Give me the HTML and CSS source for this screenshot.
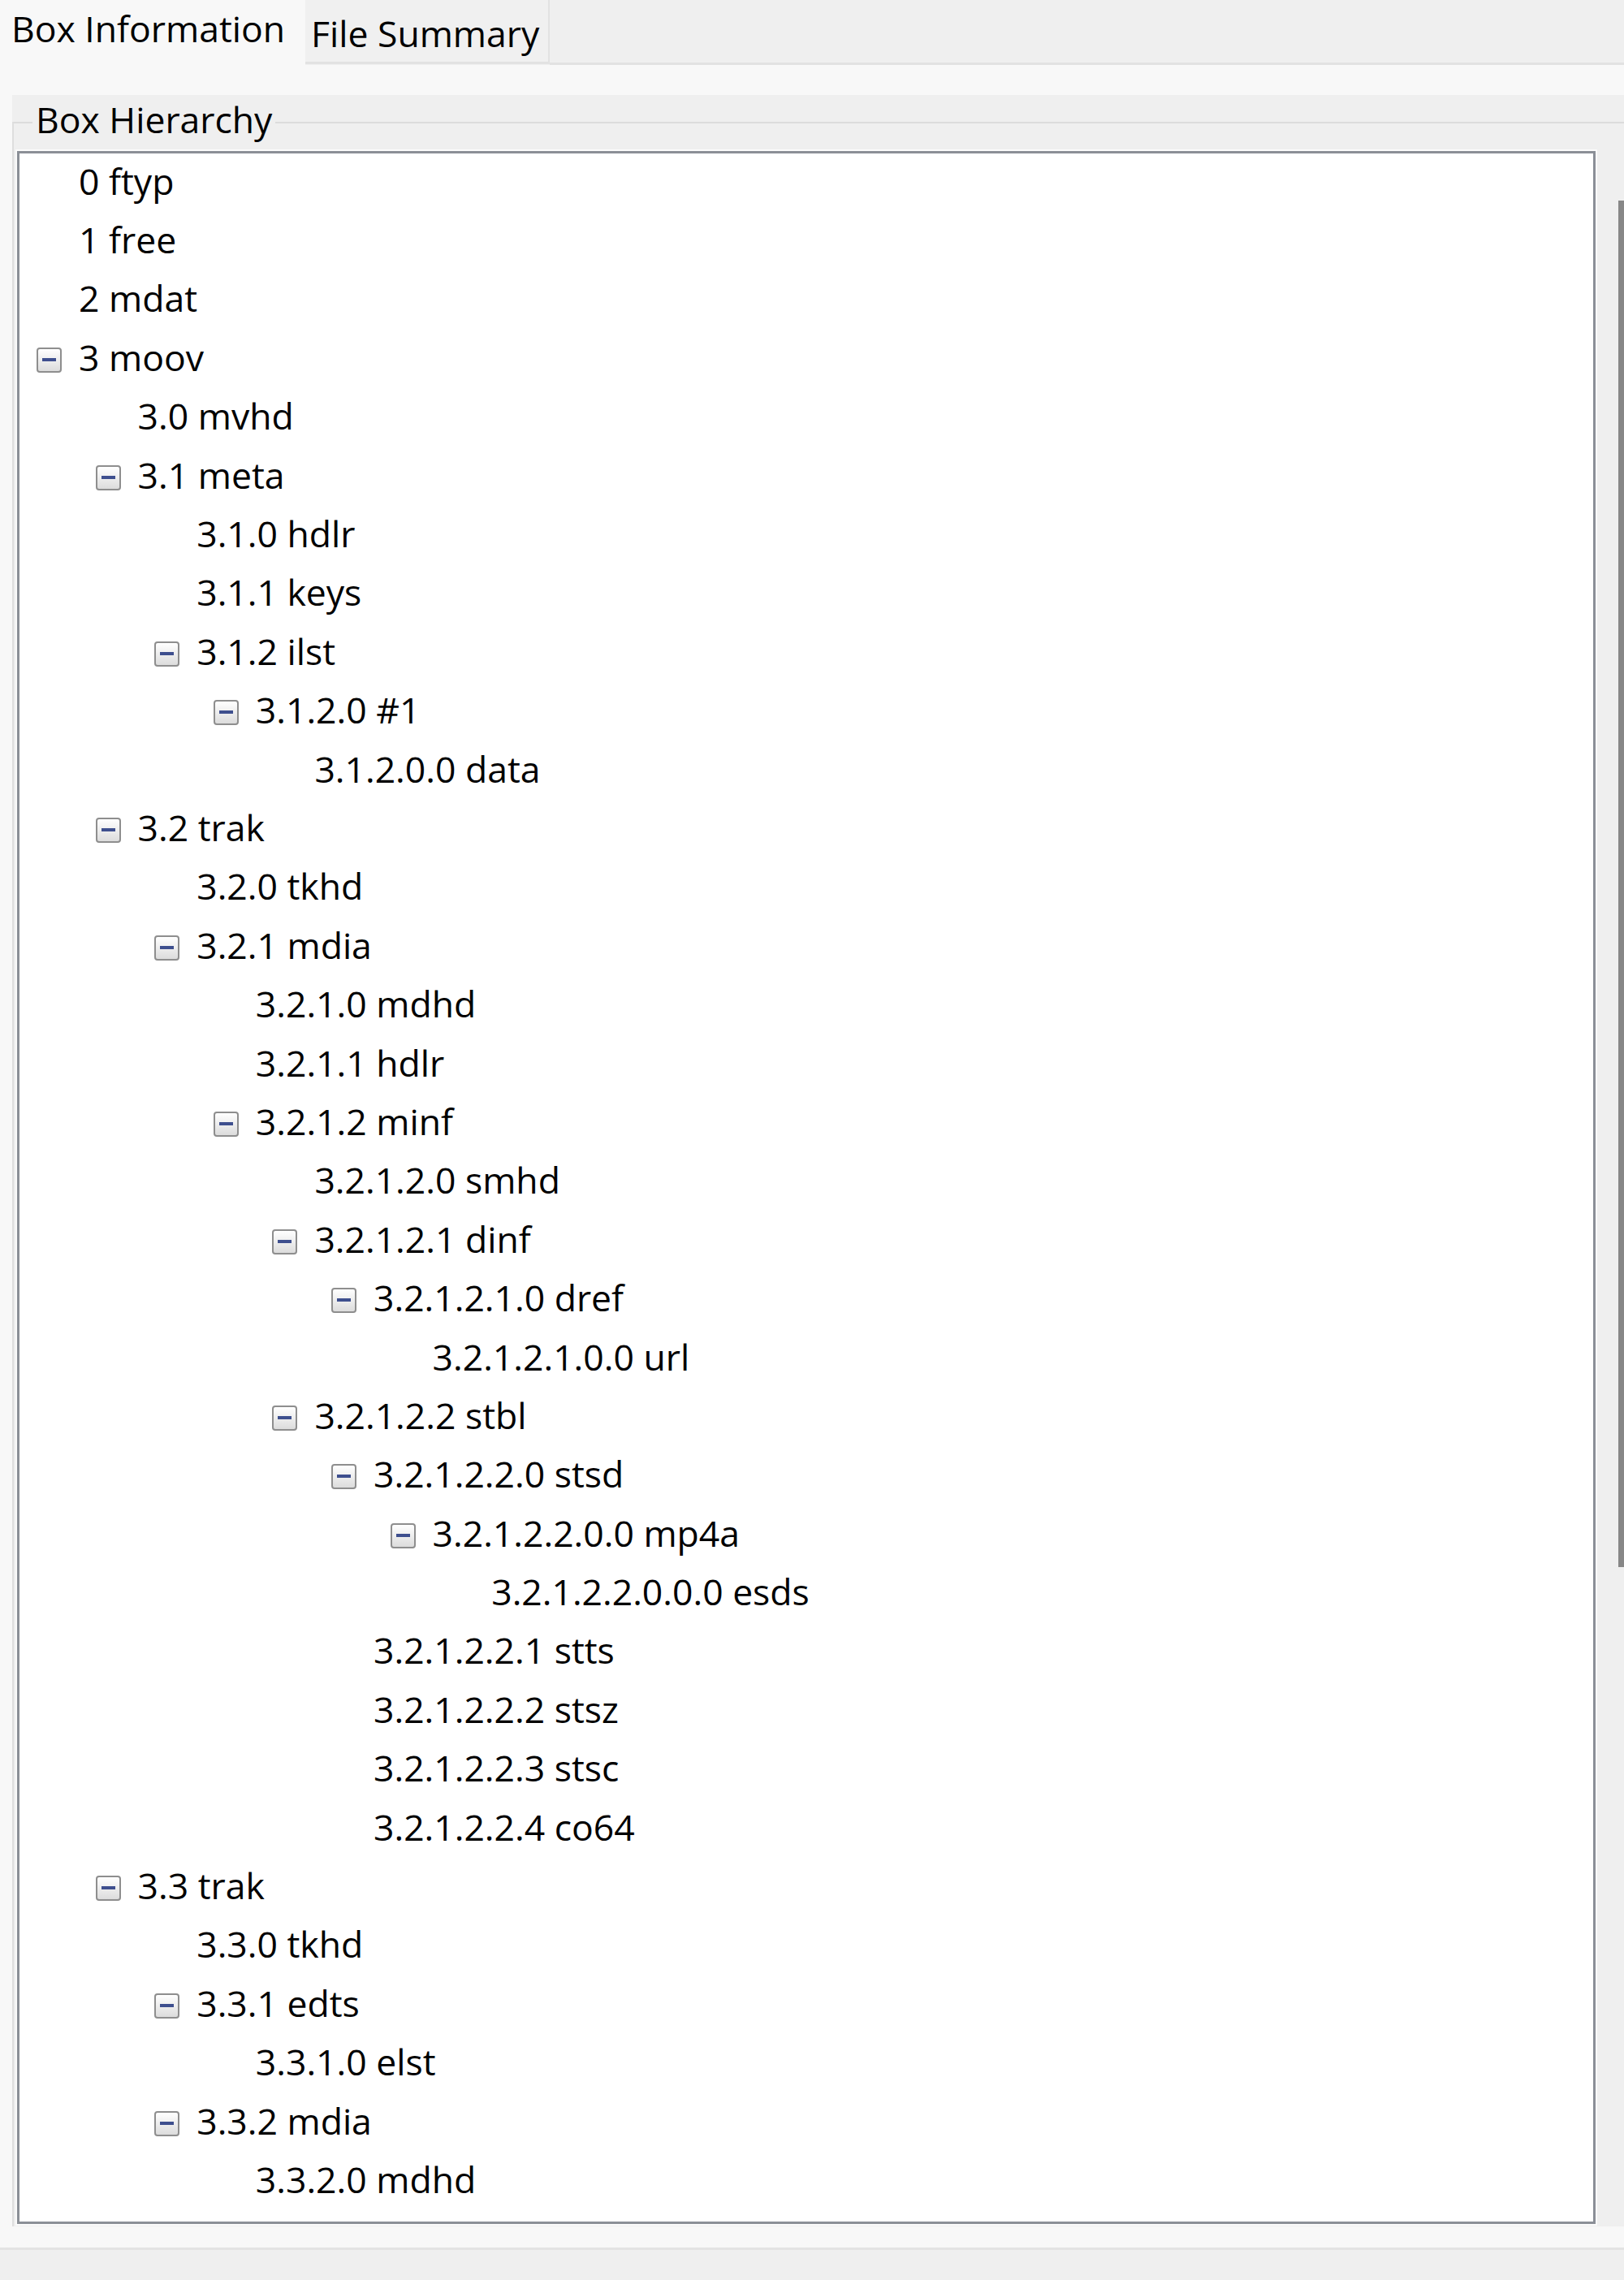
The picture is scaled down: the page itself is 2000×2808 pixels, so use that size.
FILE: index.html
```html
<!DOCTYPE html>
<html>
<head>
<meta charset="utf-8">
<link rel="stylesheet" href="styles.css">
</head>
<body>
<div class="window">
  <div class="tabbar">
    <div class="tab tab-active">Box Information</div>
    <div class="tab tab-idle">File Summary</div>
    <div class="tab-fill"></div>
  </div>
  <div class="pane">
    <div class="group">
      <div class="frame">
        <div class="legend">Box Hierarchy</div>
        <div class="tree">
          <div class="row l0"><span class="sp"></span><span class="lbl">0 ftyp</span></div>
          <div class="row l0"><span class="sp"></span><span class="lbl">1 free</span></div>
          <div class="row l0"><span class="sp"></span><span class="lbl">2 mdat</span></div>
          <div class="row l0"><span class="tg"></span><span class="lbl">3 moov</span></div>
          <div class="row l1"><span class="sp"></span><span class="lbl">3.0 mvhd</span></div>
          <div class="row l1"><span class="tg"></span><span class="lbl">3.1 meta</span></div>
          <div class="row l2"><span class="sp"></span><span class="lbl">3.1.0 hdlr</span></div>
          <div class="row l2"><span class="sp"></span><span class="lbl">3.1.1 keys</span></div>
          <div class="row l2"><span class="tg"></span><span class="lbl">3.1.2 ilst</span></div>
          <div class="row l3"><span class="tg"></span><span class="lbl">3.1.2.0 #1</span></div>
          <div class="row l4"><span class="sp"></span><span class="lbl">3.1.2.0.0 data</span></div>
          <div class="row l1"><span class="tg"></span><span class="lbl">3.2 trak</span></div>
          <div class="row l2"><span class="sp"></span><span class="lbl">3.2.0 tkhd</span></div>
          <div class="row l2"><span class="tg"></span><span class="lbl">3.2.1 mdia</span></div>
          <div class="row l3"><span class="sp"></span><span class="lbl">3.2.1.0 mdhd</span></div>
          <div class="row l3"><span class="sp"></span><span class="lbl">3.2.1.1 hdlr</span></div>
          <div class="row l3"><span class="tg"></span><span class="lbl">3.2.1.2 minf</span></div>
          <div class="row l4"><span class="sp"></span><span class="lbl">3.2.1.2.0 smhd</span></div>
          <div class="row l4"><span class="tg"></span><span class="lbl">3.2.1.2.1 dinf</span></div>
          <div class="row l5"><span class="tg"></span><span class="lbl">3.2.1.2.1.0 dref</span></div>
          <div class="row l6"><span class="sp"></span><span class="lbl">3.2.1.2.1.0.0 url</span></div>
          <div class="row l4"><span class="tg"></span><span class="lbl">3.2.1.2.2 stbl</span></div>
          <div class="row l5"><span class="tg"></span><span class="lbl">3.2.1.2.2.0 stsd</span></div>
          <div class="row l6"><span class="tg"></span><span class="lbl">3.2.1.2.2.0.0 mp4a</span></div>
          <div class="row l7"><span class="sp"></span><span class="lbl">3.2.1.2.2.0.0.0 esds</span></div>
          <div class="row l5"><span class="sp"></span><span class="lbl">3.2.1.2.2.1 stts</span></div>
          <div class="row l5"><span class="sp"></span><span class="lbl">3.2.1.2.2.2 stsz</span></div>
          <div class="row l5"><span class="sp"></span><span class="lbl">3.2.1.2.2.3 stsc</span></div>
          <div class="row l5"><span class="sp"></span><span class="lbl">3.2.1.2.2.4 co64</span></div>
          <div class="row l1"><span class="tg"></span><span class="lbl">3.3 trak</span></div>
          <div class="row l2"><span class="sp"></span><span class="lbl">3.3.0 tkhd</span></div>
          <div class="row l2"><span class="tg"></span><span class="lbl">3.3.1 edts</span></div>
          <div class="row l3"><span class="sp"></span><span class="lbl">3.3.1.0 elst</span></div>
          <div class="row l2"><span class="tg"></span><span class="lbl">3.3.2 mdia</span></div>
          <div class="row l3"><span class="sp"></span><span class="lbl">3.3.2.0 mdhd</span></div>
        </div>
      </div>
    </div>
    <div class="vscroll"><div class="thumb"></div></div>
  </div>
  <div class="footer"></div>
</div>
</body>
</html>
```

FILE: styles.css
```css
* { box-sizing: border-box; }
html, body { margin: 0; padding: 0; }
body {
  background: #efefef;
  font-family: "Open Sans", "Noto Sans", sans-serif;
  font-size: 44.5px;
  color: #000;
  width: 2000px;
  height: 2808px;
  overflow: hidden;
}
.window { display: flex; flex-direction: column; height: 2808px; }
.tabbar { display: flex; height: 80px; flex: none; }
.tab { white-space: nowrap; }
.tab-active {
  width: 376px;
  background: #f8f8f8;
  padding: 6px 0 0 14px;
  line-height: 58px;
}
.tab-idle {
  width: 301px;
  height: 79px;
  background: #f0f0f0;
  border-right: 2px solid #e2e2e2;
  border-bottom: 3px solid #e2e2e2;
  padding: 12px 0 0 7px;
  line-height: 58px;
}
.tab-fill { flex: 1; height: 80px; border-bottom: 3px solid #e2e2e2; }
.pane {
  position: relative;
  background: #f8f8f8;
  height: 2691px;
  padding: 37px 0 26px 15px;
  border-bottom: 3px solid #e3e3e3;
  flex: none;
}
.group { background: #efefef; height: 100%; padding-top: 33px; }
.frame {
  height: 100%;
  border-top: 2px solid #dcdcdc;
  border-left: 2px solid #dedede;
  padding-left: 4px;
}
.legend {
  width: fit-content;
  margin: -35px 0 0 19px;
  padding: 0 4px;
  height: 60px;
  line-height: 60px;
  background: #efefef;
}
.tree {
  margin-top: 9px;
  width: 1944px;
  height: 2553px;
  background: #fff;
  border: 3px solid #8b8f97;
  box-shadow: 0 0 0 2px #fbfbfb;
  overflow: hidden;
}
.row { display: flex; align-items: center; height: 72.4px; white-space: nowrap; }
.lbl { margin-bottom: 6px; }
.l0 { padding-left: 21px; }
.l1 { padding-left: 93.6px; }
.l2 { padding-left: 166.2px; }
.l3 { padding-left: 238.8px; }
.l4 { padding-left: 311.4px; }
.l5 { padding-left: 384px; }
.l6 { padding-left: 456.6px; }
.l7 { padding-left: 529.2px; }
.sp { width: 31px; height: 31px; margin-right: 21px; flex: none; }
.tg {
  position: relative;
  width: 31px; height: 31px; margin-right: 21px; flex: none;
  border: 2px solid #8e8e8e;
  border-radius: 4px;
  background: linear-gradient(#ffffff, #dcdcdc);
  margin-top: 2px;
}
.tg::after {
  content: "";
  position: absolute;
  left: 5px; right: 5px; top: 11px; height: 4px;
  background: #3e4f8e;
}
.vscroll { position: absolute; left: 1993px; top: 167px; width: 7px; height: 1683px; }
.thumb { width: 100%; height: 100%; background: #878787; }
.footer { flex: 1; background: #efefef; }
```
